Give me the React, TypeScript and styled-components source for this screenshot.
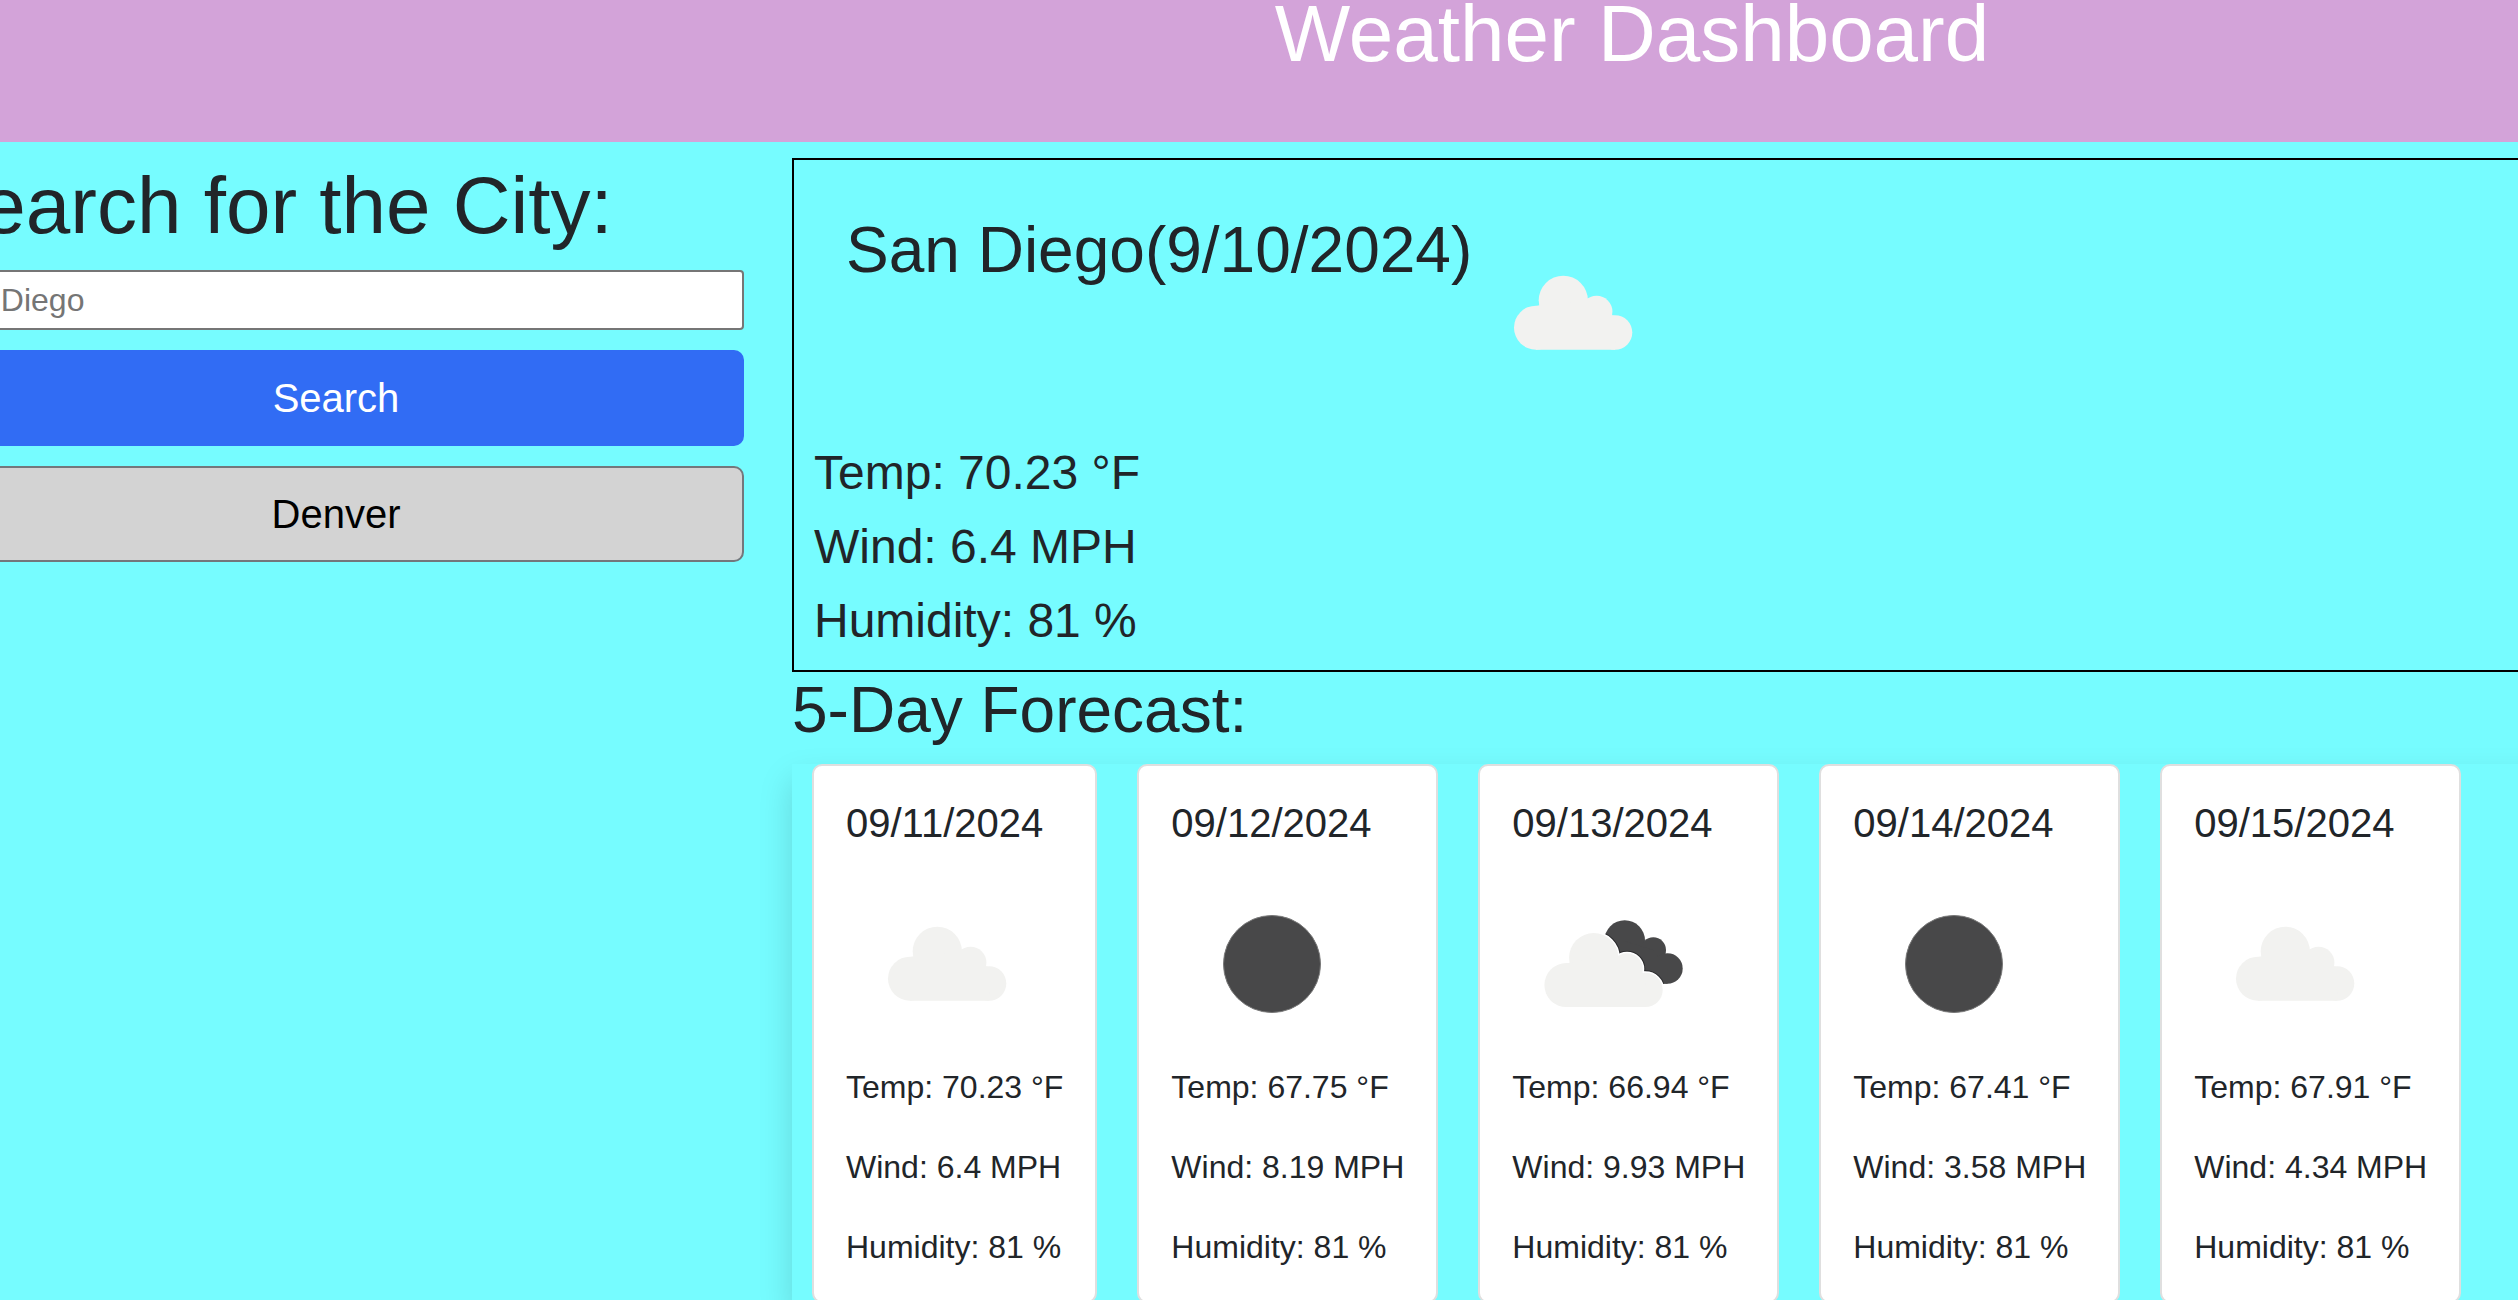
import React, { useId } from 'react';
import styled, { createGlobalStyle } from 'styled-components';

const GlobalStyle = createGlobalStyle`
  *, *::before, *::after { box-sizing: border-box; }
  html, body { margin: 0; }
  body {
    background: #76fcff;
    color: #212529;
    font-family: Arial, "Liberation Sans", sans-serif;
    font-size: 32px;
    line-height: 48px;
  }
`;

const Viewport = styled.div`
  height: 100vh;
  overflow: hidden;
`;

/* The dashboard bleeds past both sides of the window. */
const Page = styled.div`
  margin: 0 -842px 0 -96px;
`;

const Header = styled.header`
  padding-bottom: 74px;
  background: #d3a3d9;
  color: #fff;
  text-align: center;
`;

const Title = styled.h1`
  margin: 0;
  font-size: 80px;
  font-weight: 400;
  line-height: 68px;
`;

const Columns = styled.div`
  display: grid;
  grid-template-columns: 1fr 3fr;
  padding-top: 16px;
`;

const Sidebar = styled.aside`
  min-width: 0;
  padding: 0 24px;
`;

const SearchForm = styled.form`
  display: flex;
  flex-direction: column;
  gap: 20px;
`;

const SearchHeading = styled.h2`
  margin: 0 0 -4px;
  font-size: 80px;
  font-weight: 400;
  line-height: 96px;
`;

const CityInput = styled.input`
  width: 100%;
  height: 60px;
  padding: 2px 5px;
  border: 2px solid #767676;
  border-radius: 4px;
  background: #fff;
  font: inherit;

  &::placeholder {
    color: #757575;
    opacity: 1;
  }
`;

const Button = styled.button<{ $primary?: boolean }>`
  width: 100%;
  padding: 16px 32px;
  border: 2px solid ${({ $primary }) => ($primary ? '#316cf4' : '#73777c')};
  border-radius: 10px;
  background: ${({ $primary }) => ($primary ? '#316cf4' : '#d3d3d3')};
  color: ${({ $primary }) => ($primary ? '#fff' : '#000')};
  font-family: inherit;
  font-size: 40px;
  line-height: 60px;
  cursor: pointer;
`;

const Main = styled.main`
  min-width: 0;
  padding: 0 24px;
`;

const Current = styled.section`
  padding: 20px;
  border: 2px solid #000;
`;

const CurrentTop = styled.div`
  display: flex;
  align-items: flex-start;
  padding: 32px;
`;

const SectionTitle = styled.h2`
  margin: 0;
  font-size: 64px;
  font-weight: 400;
  line-height: 76px;
`;

const Readings = styled.div`
  display: grid;
  gap: 16px;
  font-size: 48px;
  line-height: 58px;
`;

const Reading = styled.p`
  margin: 0;
  white-space: nowrap;
`;

const Cards = styled.div`
  display: flex;
  align-items: flex-start;
  gap: 40px;
  margin-top: 16px;
  padding: 0 20px;
  box-shadow: 0 16px 32px rgba(0, 0, 0, 0.15);
`;

const Card = styled.article`
  padding: 33px 32px 30px;
  border: 2px solid #dfdfdf;
  border-radius: 10px;
  background: #fff;
`;

const CardDate = styled.h3`
  margin: 0 0 16px;
  font-size: 40px;
  font-weight: 400;
  line-height: 48px;
`;

const CardReadings = styled.div`
  display: grid;
  gap: 32px;
`;

const Picture = styled.svg`
  display: block;
  flex: none;
  width: 200px;
  height: 200px;
`;

const CloudShape = () => (
  <>
    <circle cx="91.3" cy="88.3" r="24.6" />
    <circle cx="64" cy="115.7" r="22" />
    <circle cx="124.6" cy="99.6" r="15.8" />
    <circle cx="143.1" cy="120.5" r="17.2" />
    <path d="M64 94 L91 88 L125 99 L143 104 L143.1 137.7 L64 137.7 Z" />
  </>
);

const DarkCloudShape = () => (
  <>
    <circle cx="112.7" cy="77.6" r="20.3" />
    <circle cx="141.3" cy="87" r="12.7" />
    <circle cx="155.5" cy="105.5" r="15.2" />
    <path d="M112 78 L141 87 L155.5 105 L155.5 120.7 L125 120.7 L100 95 Z" />
  </>
);

type Sky = 'cloud' | 'clear' | 'broken';

function SkyIcon({ sky }: { sky: Sky }) {
  const clip = useId();
  if (sky === 'clear') {
    return (
      <Picture viewBox="0 0 200 200" role="img" aria-label="Clear night">
        <circle cx="101" cy="101" r="48.5" fill="#484849" stroke="#777" strokeWidth="1" />
      </Picture>
    );
  }
  if (sky === 'cloud') {
    return (
      <Picture viewBox="0 0 200 200" role="img" aria-label="Cloudy">
        <g fill="#f2f2f0">
          <CloudShape />
        </g>
      </Picture>
    );
  }
  return (
    <Picture viewBox="0 0 200 200" role="img" aria-label="Broken clouds">
      <clipPath id={clip}>
        <DarkCloudShape />
      </clipPath>
      <g fill="#484849">
        <DarkCloudShape />
      </g>
      <g clipPath={`url(#${clip})`}>
        <g transform="translate(-9.6 6.4)" fill="#29292b" stroke="#29292b" strokeWidth="5">
          <CloudShape />
        </g>
      </g>
      <g transform="translate(-9.6 6.4)" fill="#fff" stroke="#fff" strokeWidth="3">
        <CloudShape />
      </g>
      <g transform="translate(-9.6 6.4)" fill="#f2f2f0">
        <CloudShape />
      </g>
    </Picture>
  );
}

const forecast: { date: string; sky: Sky; temp: string; wind: string; humidity: string }[] = [
  { date: '09/11/2024', sky: 'cloud', temp: '70.23', wind: '6.4', humidity: '81' },
  { date: '09/12/2024', sky: 'clear', temp: '67.75', wind: '8.19', humidity: '81' },
  { date: '09/13/2024', sky: 'broken', temp: '66.94', wind: '9.93', humidity: '81' },
  { date: '09/14/2024', sky: 'clear', temp: '67.41', wind: '3.58', humidity: '81' },
  { date: '09/15/2024', sky: 'cloud', temp: '67.91', wind: '4.34', humidity: '81' },
];

export default function App() {
  return (
    <Viewport>
      <GlobalStyle />
      <Page>
        <Header>
          <Title>Weather Dashboard</Title>
        </Header>
        <Columns>
          <Sidebar>
            <SearchForm onSubmit={(event) => event.preventDefault()}>
              <SearchHeading>
                <label htmlFor="city">Search for the City:</label>
              </SearchHeading>
              <CityInput id="city" type="text" placeholder="San Diego" />
              <Button type="submit" $primary>
                Search
              </Button>
              <Button type="button">Denver</Button>
            </SearchForm>
          </Sidebar>
          <Main>
            <Current>
              <CurrentTop>
                <SectionTitle>San Diego(9/10/2024)</SectionTitle>
                <SkyIcon sky="cloud" />
              </CurrentTop>
              <Readings>
                <Reading>Temp: 70.23 °F</Reading>
                <Reading>Wind: 6.4 MPH</Reading>
                <Reading>Humidity: 81 %</Reading>
              </Readings>
            </Current>
            <SectionTitle>5-Day Forecast:</SectionTitle>
            <Cards>
              {forecast.map((day) => (
                <Card key={day.date}>
                  <CardDate>{day.date}</CardDate>
                  <SkyIcon sky={day.sky} />
                  <CardReadings>
                    <Reading>Temp: {day.temp} °F</Reading>
                    <Reading>Wind: {day.wind} MPH</Reading>
                    <Reading>Humidity: {day.humidity} %</Reading>
                  </CardReadings>
                </Card>
              ))}
            </Cards>
          </Main>
        </Columns>
      </Page>
    </Viewport>
  );
}
